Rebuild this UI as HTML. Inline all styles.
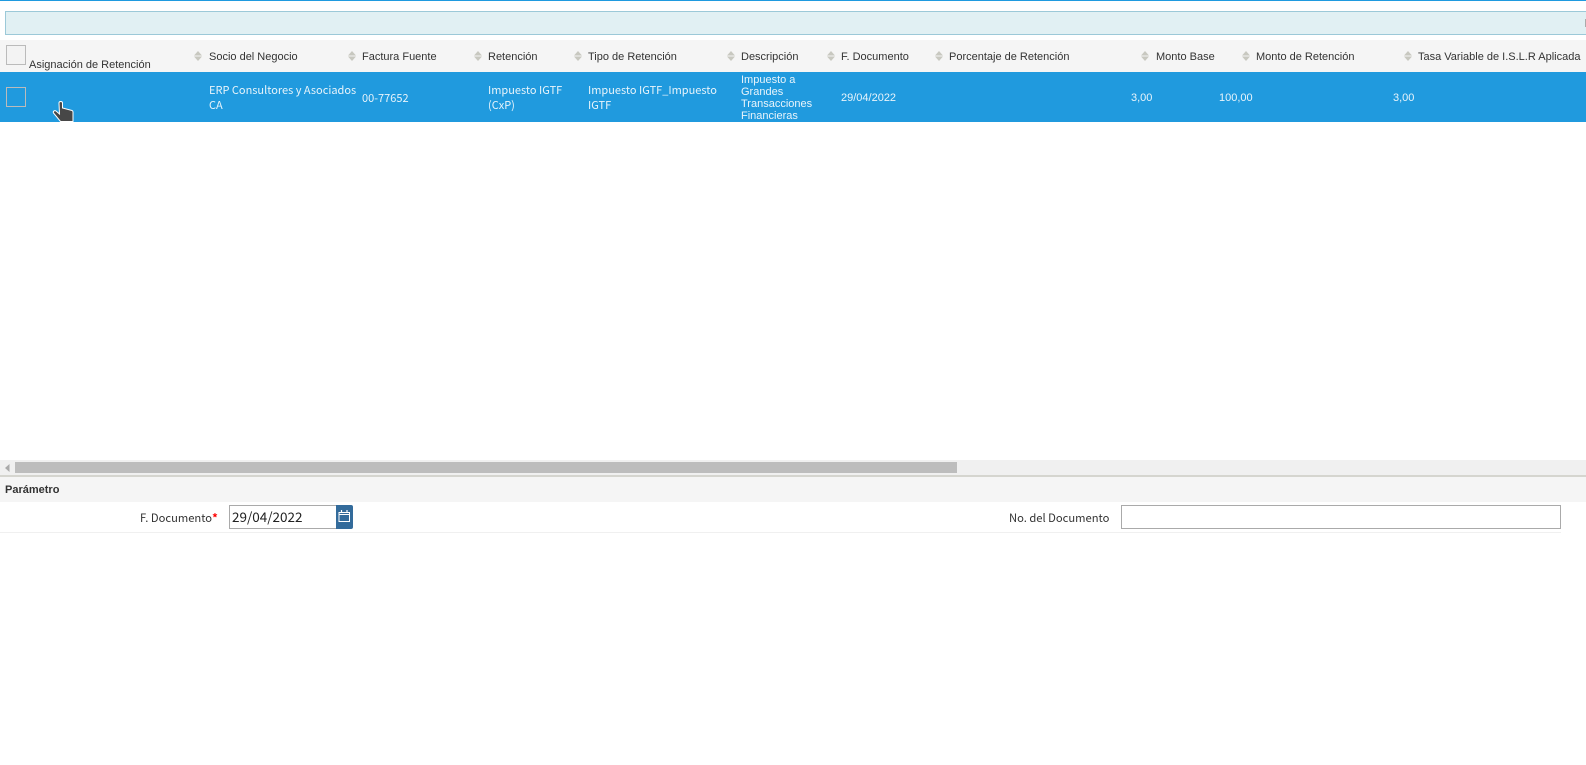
<!DOCTYPE html>
<html><head><meta charset="utf-8"><style>
html,body{margin:0;padding:0;background:#fff;width:1586px;height:765px;overflow:hidden}
body{position:relative;font-family:"Liberation Sans",sans-serif}
.a{position:absolute}
.h{position:absolute;top:50px;font-size:11px;line-height:14px;color:#333;white-space:nowrap}
.c{position:absolute;font-family:"Noto Sans CJK JP",sans-serif;font-size:11px;line-height:15px;color:#e8f4fb;white-space:nowrap}
.n{font-family:"Liberation Sans",sans-serif;font-size:11px}
.s{position:absolute;top:51px;width:8px;height:10px}
.l{position:absolute;top:511px;font-family:"Noto Sans CJK JP",sans-serif;font-size:11.2px;line-height:15px;color:#333;white-space:nowrap}
</style></head><body>
<div class="a" style="left:0;top:0;width:1586px;height:1px;background:#1f9adf"></div>
<div class="a" style="left:5px;top:11px;width:1581px;height:24px;box-sizing:border-box;background:#e1f0f3;border:1px solid #9cc9d8;border-right:0"></div>
<div class="a" style="left:1585px;top:19px;width:1px;height:8px;background:#aaa"></div>
<div class="a" style="left:0;top:40px;width:1586px;height:32px;background:#f5f5f5"></div>
<div class="a" style="left:6px;top:45px;width:20px;height:20px;box-sizing:border-box;border:1px solid #bbb;background:#f3f3f3"></div>
<div class="h" style="left:29px;top:58px">Asignación de Retención</div>
<svg class="s" style="left:194px" viewBox="0 0 8 10"><path d="M4 0L8 4.500H0zM0 5.500h8L4 10z" fill="#c8c8c0"/></svg><div class="h" style="left:209px">Socio del Negocio</div>
<svg class="s" style="left:348px" viewBox="0 0 8 10"><path d="M4 0L8 4.500H0zM0 5.500h8L4 10z" fill="#c8c8c0"/></svg><div class="h" style="left:362px">Factura Fuente</div>
<svg class="s" style="left:474px" viewBox="0 0 8 10"><path d="M4 0L8 4.500H0zM0 5.500h8L4 10z" fill="#c8c8c0"/></svg><div class="h" style="left:488px">Retención</div>
<svg class="s" style="left:574px" viewBox="0 0 8 10"><path d="M4 0L8 4.500H0zM0 5.500h8L4 10z" fill="#c8c8c0"/></svg><div class="h" style="left:588px">Tipo de Retención</div>
<svg class="s" style="left:727px" viewBox="0 0 8 10"><path d="M4 0L8 4.500H0zM0 5.500h8L4 10z" fill="#c8c8c0"/></svg><div class="h" style="left:741px">Descripción</div>
<svg class="s" style="left:827px" viewBox="0 0 8 10"><path d="M4 0L8 4.500H0zM0 5.500h8L4 10z" fill="#c8c8c0"/></svg><div class="h" style="left:841px">F. Documento</div>
<svg class="s" style="left:935px" viewBox="0 0 8 10"><path d="M4 0L8 4.500H0zM0 5.500h8L4 10z" fill="#c8c8c0"/></svg><div class="h" style="left:949px">Porcentaje de Retención</div>
<svg class="s" style="left:1141px" viewBox="0 0 8 10"><path d="M4 0L8 4.500H0zM0 5.500h8L4 10z" fill="#c8c8c0"/></svg><div class="h" style="left:1156px">Monto Base</div>
<svg class="s" style="left:1242px" viewBox="0 0 8 10"><path d="M4 0L8 4.500H0zM0 5.500h8L4 10z" fill="#c8c8c0"/></svg><div class="h" style="left:1256px">Monto de Retención</div>
<svg class="s" style="left:1404px" viewBox="0 0 8 10"><path d="M4 0L8 4.500H0zM0 5.500h8L4 10z" fill="#c8c8c0"/></svg><div class="h" style="left:1418px">Tasa Variable de I.S.L.R Aplicada</div>

<div class="a" style="left:0;top:72px;width:1586px;height:50px;background:#209ade"></div>
<div class="a" style="left:6px;top:87px;width:20px;height:20px;box-sizing:border-box;border:1px solid #bbb;background:#209ade"></div>
<div class="c" style="left:209px;top:83px">ERP Consultores y Asociados<br>CA</div>
<div class="c" style="left:362px;top:91px">00-77652</div>
<div class="c" style="left:488px;top:83px">Impuesto IGTF<br>(CxP)</div>
<div class="c" style="left:588px;top:83px">Impuesto IGTF_Impuesto<br>IGTF</div>
<div class="c n" style="left:741px;top:74px;line-height:12px">Impuesto a<br>Grandes<br>Transacciones<br>Financieras</div>
<div class="c n" style="left:841px;top:91px">29/04/2022</div>
<div class="c n" style="left:1131px;top:91px">3,00</div>
<div class="c n" style="left:1219px;top:91px">100,00</div>
<div class="c n" style="left:1393px;top:91px">3,00</div>
<svg class="a" style="left:52px;top:100px" width="22" height="23" viewBox="0 0 22 23"><path d="M7 3c0-2 3.500-2 3.500 0V8L20 10.500c.8.3 1 .8 1 1.500V21.500H8.500L1.500 13c-.8-1.500 1-3 2.500-2L7.500 14z" fill="#474747" stroke="#fff" stroke-width="1"/></svg>

<div class="a" style="left:0;top:460px;width:1586px;height:15px;background:#f0f0f0"></div>
<svg class="a" style="left:5px;top:464px" width="5" height="8" viewBox="0 0 5 8"><path d="M4.500 0V8L0 4z" fill="#aaa"/></svg>
<div class="a" style="left:15px;top:462px;width:942px;height:11px;background:#bdbdbd"></div>
<div class="a" style="left:0;top:475px;width:1586px;height:2px;background:#d5d5cf"></div>
<div class="a" style="left:0;top:477px;width:1586px;height:25px;background:#f5f5f5"></div>
<div class="a" style="left:5px;top:483px;font-size:11px;line-height:14px;font-weight:bold;color:#333">Parámetro</div>
<div class="a" style="left:0;top:532px;width:1561px;height:1px;background:#f0f0f0"></div>
<div class="l" style="left:140px">F. Documento<span style="color:#f00;font-weight:bold">*</span></div>
<div class="a" style="left:229px;top:505px;width:108px;height:24px;box-sizing:border-box;border:1px solid #aaa;background:#fff;font-family:'Noto Sans CJK JP',sans-serif;font-size:13.5px;line-height:20px;color:#222;padding-left:2px">29/04/2022</div>
<div class="a" style="left:336px;top:505px;width:17px;height:24px;background:#336b9b;border-radius:0 2px 2px 0"></div>
<svg class="a" style="left:338px;top:510px" width="13" height="12" viewBox="0 0 13 12"><path d="M1 2.500h10.500v9H1zM1 4.500h10.500" fill="none" stroke="#fff" stroke-width="1"/><path d="M3.500 0v2M9 0v2" stroke="#fff" stroke-width="1.200"/></svg>
<div class="l" style="left:1009px">No. del Documento</div>
<div class="a" style="left:1121px;top:505px;width:440px;height:24px;box-sizing:border-box;border:1px solid #aaa;background:#fff"></div>
</body></html>
